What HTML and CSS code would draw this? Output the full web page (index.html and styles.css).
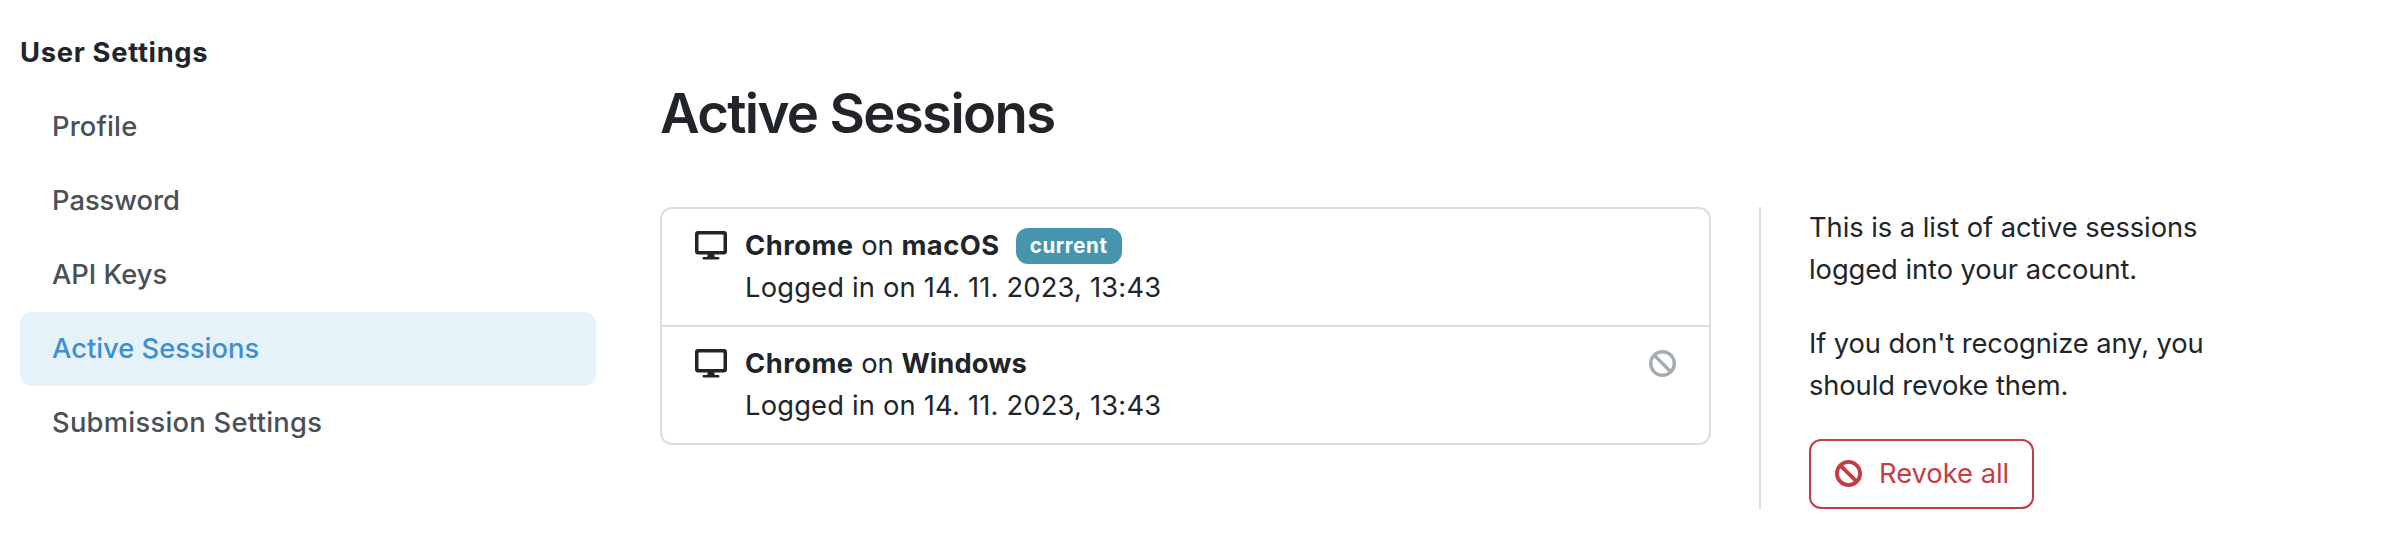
FILE: index.html
```html
<!DOCTYPE html>
<html lang="en">
<head>
<meta charset="utf-8">
<title>Active Sessions</title>
<link rel="stylesheet" href="styles.css">
</head>
<body>
<svg width="0" height="0" class="sprite" aria-hidden="true">
  <symbol id="desktop" viewBox="0 0 32 29">
    <path fill-rule="evenodd" d="M3 0H29a3 3 0 0 1 3 3V20.500a3 3 0 0 1-3 3H19.300l.5 2.500H23.200a1.250 1.250 0 0 1 0 2.500H8.800a1.250 1.250 0 0 1 0-2.500H12.200l.5-2.500H3a3 3 0 0 1-3-3V3a3 3 0 0 1 3-3ZM4 3.400a.5.5 0 0 0-.5.5V19.500a.5.5 0 0 0 .5.5H28a.5.5 0 0 0 .5-.5V3.900a.5.5 0 0 0-.5-.5Z"/>
  </symbol>
</svg>
<div class="page">
  <nav class="sidebar">
    <div class="sidebar-title">User Settings</div>
    <a class="item profile">Profile</a>
    <a class="item password">Password</a>
    <a class="item keys">API Keys</a>
    <a class="item sessions-link active">Active Sessions</a>
    <a class="item submission">Submission Settings</a>
  </nav>
  <main class="main">
    <h1 class="heading">Active Sessions</h1>
    <div class="columns">
      <ul class="sessions">
        <li class="session">
          <svg class="desktop"><use href="#desktop"/></svg>
          <div class="details">
            <div class="client"><span><b>Chrome</b> on <b>macOS</b></span><span class="badge">current</span></div>
            <div class="time">Logged in on 14. 11. 2023, 13:43</div>
          </div>
        </li>
        <li class="session">
          <svg class="desktop"><use href="#desktop"/></svg>
          <div class="details">
            <div class="client"><span><b>Chrome</b> on <b class="windows">Windows</b></span></div>
            <div class="time">Logged in on 14. 11. 2023, 13:43</div>
          </div>
          <svg class="ban" viewBox="0 0 27 27"><circle cx="13.500" cy="13.500" r="11.800"/><path d="M5.300 5.300L21.700 21.700"/></svg>
        </li>
      </ul>
      <aside class="info">
        <p>This is a list of active sessions<br>logged into your account.</p>
        <p class="hint">If you don't recognize any, you<br>should revoke them.</p>
        <button class="revoke"><svg class="ban bold" viewBox="0 0 27 27"><circle cx="13.500" cy="13.500" r="11.600"/><path d="M5.300 5.300L21.700 21.700"/></svg><span>Revoke all</span></button>
      </aside>
    </div>
  </main>
</div>
</body>
</html>
```
FILE: styles.css
```css
* { box-sizing: border-box; }
body {
  margin: 0;
  background: #fff;
  color: #212529;
  font: 400 27.3px/42px Inter, "Liberation Sans", sans-serif;
}
.sprite { display: block; }
.page { display: flex; padding-left: 20px; }
.sidebar { width: 576px; padding-top: 16px; font-weight: 500; }
.sidebar-title { padding: 16px 0; font-weight: 700; letter-spacing: 0.7px; }
.item { display: block; padding: 16px 32px; color: #495057; border-radius: 12px; }
.item.profile { letter-spacing: 0.15px; }
.item.submission { letter-spacing: 0.28px; }
.item.active { background: #e5f2fa; color: #3d8fd1; }
.main { margin-left: 64px; padding-top: 80px; }
.heading { margin: 0 0 60px; font-size: 54.5px; line-height: 67px; font-weight: 570; letter-spacing: -1.65px; }
.columns { display: flex; align-items: flex-start; }
.sessions {
  width: 1051px; margin: 0; padding: 0; list-style: none;
  border: 2px solid #dadee3; border-radius: 12px;
}
.session { display: flex; padding: 16px 33px; }
.session + .session { border-top: 2px solid #dadee3; }
.details { margin-left: 18px; flex: 1; white-space: nowrap; }
.client { display: flex; align-items: center; height: 42px; }
.time { letter-spacing: 0.2px; }
b { font-weight: 700; letter-spacing: 0.5px; }
.windows { letter-spacing: 0.1px; }
.badge {
  width: 106px; height: 36px; margin-left: 16px; border-radius: 12px;
  background: #4695ae; color: #fff; text-align: center;
  font-size: 20.5px; line-height: 36px; font-weight: 700; letter-spacing: 0.6px;
}
.desktop { width: 32px; height: 29px; margin-top: 6px; fill: #212529; }
.ban { width: 27px; height: 27px; margin-top: 7px; fill: none; stroke: #a4acb4; stroke-width: 3.4; }
.info { width: 500px; margin-left: 48px; padding-left: 48px; border-left: 2px solid #dadee3; white-space: nowrap; }
.info p { margin: 0 0 32px; letter-spacing: -0.05px; }
.info p.hint { letter-spacing: -0.1px; }
.revoke {
  display: flex; align-items: center; width: 225px; height: 70px; padding: 0 0 0 24px;
  border: 2px solid #c43d45; border-radius: 12px; background: #fff; color: #c43d45;
  font: inherit; gap: 17px;
}
.ban.bold { margin: -1px 0 0; stroke: #c43d45; stroke-width: 3.8; }
```
